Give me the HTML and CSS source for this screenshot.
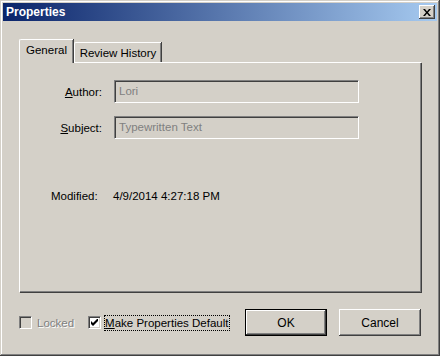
FILE: index.html
```html
<!DOCTYPE html>
<html lang="en">
<head>
  <meta charset="utf-8">
  <title>Properties</title>
  <link rel="stylesheet" href="styles.css">
</head>
<body>
  <div class="window">
    <div class="titlebar">
      <span class="title">Properties</span>
      <button class="close-btn" aria-label="Close">
        <svg width="8" height="7" viewBox="0 0 8 7">
          <path d="M0 0h2l2 2.5 2-2.5h2l-3 3.5 3 3.5h-2l-2-2.5-2 2.5h-2l3-3.5z" fill="#000"/>
        </svg>
      </button>
    </div>

    <div class="content">
      <div class="tabs">
        <div class="tab tab-active">General</div>
        <div class="tab tab-history">Review History</div>
      </div>

      <div class="panel">
        <div class="fields">
          <label class="field-label"><u>A</u>uthor:</label>
          <div class="field-input">Lori</div>
          <label class="field-label"><u>S</u>ubject:</label>
          <div class="field-input">Typewritten Text</div>
        </div>
        <div class="modified">
          <span class="modified-label">Modified:</span>
          <span>4/9/2014 4:27:18 PM</span>
        </div>
      </div>

      <div class="footer">
        <label class="check check-disabled">
          <span class="box"></span>
          <span class="check-text">Locked</span>
        </label>
        <label class="check">
          <span class="box box-on">
            <svg width="7" height="7" viewBox="0 0 7 7">
              <path d="M0 2v3l2 2 5-5v-3l-5 5z" fill="#000"/>
            </svg>
          </span>
          <span class="check-text check-focus"><u>M</u>ake Properties Default</span>
        </label>
        <div class="buttons">
          <button class="btn btn-default">OK</button>
          <button class="btn">Cancel</button>
        </div>
      </div>
    </div>
  </div>
</body>
</html>
```

FILE: styles.css
```css
html, body {
  margin: 0;
  padding: 0;
}
body {
  background: #d4d0c8;
  font-family: "Liberation Sans", Arial, sans-serif;
  font-size: 11.5px;
  color: #000;
}

.window {
  width: 440px;
  height: 356px;
  box-sizing: border-box;
  padding: 3px;
  background: #d4d0c8;
  box-shadow: inset -1px -1px #404040, inset 1px 1px #d4d0c8,
              inset -2px -2px #808080, inset 2px 2px #fff;
  display: flex;
  flex-direction: column;
}

.titlebar {
  height: 18px;
  display: flex;
  align-items: center;
  justify-content: space-between;
  padding: 0 2px 0 3px;
  background: linear-gradient(to right, #0a246a, #a6caf0);
}
.title {
  color: #fff;
  font-weight: bold;
  font-size: 12px;
}
.close-btn {
  width: 16px;
  height: 14px;
  padding: 0;
  margin: 0;
  border: 0;
  background: #d4d0c8;
  display: flex;
  align-items: center;
  justify-content: center;
  box-shadow: inset -1px -1px #404040, inset 1px 1px #fff,
              inset -2px -2px #808080;
}

.content {
  padding: 18px 16px 0 16px;
  display: flex;
  flex-direction: column;
}

.tabs {
  display: flex;
  align-items: flex-end;
  height: 23px;
}
.tab {
  height: 20px;
  line-height: 20px;
  box-sizing: border-box;
  text-align: center;
  white-space: nowrap;
  border-top: 1px solid #fff;
  border-left: 1px solid #fff;
  border-top-left-radius: 2px;
  box-shadow: inset -1px 0 #808080, 1px 0 #404040;
}
.tab-active {
  position: relative;
  z-index: 1;
  width: 54px;
  height: 24px;
  line-height: 20px;
  margin-bottom: -1px;
  margin-right: 1px;
  background: #d4d0c8;
}
.tab-history {
  width: 87px;
}

.panel {
  height: 230px;
  box-sizing: border-box;
  border-top: 1px solid #fff;
  border-left: 1px solid #fff;
  box-shadow: inset -1px -1px #808080, 1px 1px #404040;
  padding-top: 17px;
}

.fields {
  display: grid;
  grid-template-columns: 82px 245px;
  column-gap: 12px;
  row-gap: 13px;
  align-items: center;
}
.field-label {
  text-align: right;
}
.field-input {
  height: 23px;
  line-height: 21px;
  box-sizing: border-box;
  padding-left: 4px;
  color: #808080;
  background: #d4d0c8;
  border-top: 1px solid #808080;
  border-left: 1px solid #808080;
  border-right: 1px solid #fff;
  border-bottom: 1px solid #fff;
  box-shadow: inset 1px 1px #404040;
}

.modified {
  margin-top: 51px;
  padding-left: 31px;
  display: flex;
}
.modified-label {
  width: 62px;
}

.footer {
  margin-top: 17px;
  display: flex;
  align-items: center;
  height: 27px;
}
.check {
  display: flex;
  align-items: center;
  white-space: nowrap;
  margin-right: 13px;
}
.box {
  width: 13px;
  height: 13px;
  box-sizing: border-box;
  border-top: 1px solid #808080;
  border-left: 1px solid #808080;
  border-right: 1px solid #fff;
  border-bottom: 1px solid #fff;
  box-shadow: inset 1px 1px #404040, inset -1px -1px #d4d0c8;
  background: #d4d0c8;
  display: flex;
  align-items: center;
  justify-content: center;
}
.box-on {
  background: #fff;
}
.check-text {
  margin-left: 4px;
  padding: 1px;
}
.check-disabled .check-text {
  color: #808080;
  text-shadow: 1px 1px #fff;
}
.check-focus {
  border: 1px dotted #000;
  padding: 1px 1px 1px 0;
  margin-left: 3px;
}

.buttons {
  margin-left: auto;
  display: flex;
  gap: 12px;
}
.btn {
  width: 82px;
  height: 27px;
  padding: 0;
  margin: 0;
  border: 0;
  font-family: inherit;
  font-size: 12px;
  color: #000;
  background: #d4d0c8;
  box-shadow: inset -1px -1px #404040, inset 1px 1px #fff,
              inset -2px -2px #808080;
}
.btn-default {
  border: 1px solid #000;
}
```
